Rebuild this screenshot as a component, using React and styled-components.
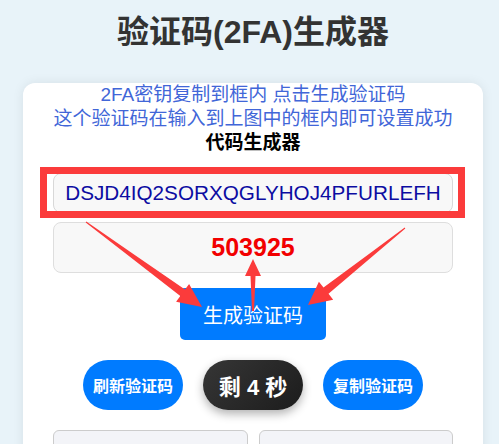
import React from "react";
import styled, { createGlobalStyle } from "styled-components";

const Global = createGlobalStyle`
  html, body { margin: 0; padding: 0; }
  body {
    background: #e8f3f9;
    font-family: "Liberation Sans", "Noto Sans CJK SC", sans-serif;
    overflow: hidden;
  }
`;

const Page = styled.div`
  width: 460px;
  margin-left: 23px;
  padding-top: 13px;
`;

const Title = styled.h1`
  margin: 0;
  height: 70px;
  font-size: 32px;
  line-height: 38px;
  font-weight: bold;
  color: #333;
  text-align: center;
  white-space: nowrap;
  font-family: "Liberation Sans", "Noto Sans CJK SC", sans-serif;
`;

const Card = styled.div`
  position: relative;
  background: #fff;
  border-radius: 12px;
  box-shadow: 0 0 12px rgba(0, 0, 0, 0.08);
  padding: 0 30px 30px;
  display: flex;
  flex-direction: column;
  align-items: center;
`;

const Hint = styled.div`
  font-size: 19px;
  line-height: 24px;
  color: #4166d8;
  text-align: center;
  white-space: nowrap;
`;

const SubTitle = styled.div`
  font-size: 19px;
  line-height: 24px;
  font-weight: bold;
  color: #000;
  text-align: center;
`;

const SecretWrap = styled.div`
  position: relative;
  margin-top: 18px;
  width: 100%;
`;

const Secret = styled.div`
  box-sizing: border-box;
  width: 100%;
  height: 40px;
  border: 1px solid #d8d8d8;
  border-radius: 8px;
  background: #f8f8f8;
  color: #0c0ca2;
  font-size: 20.7px;
  display: flex;
  align-items: center;
  justify-content: center;
  white-space: nowrap;
`;

const RedFrame = styled.div`
  position: absolute;
  left: -13px;
  right: -12px;
  top: -6px;
  bottom: -5px;
  border: 7px solid #fb3b3b;
  pointer-events: none;
`;

const Code = styled.div`
  box-sizing: border-box;
  margin-top: 9px;
  width: 100%;
  height: 51px;
  border: 1px solid #dedede;
  border-radius: 8px;
  background: #f8f8f8;
  color: #f20000;
  font-size: 25px;
  font-weight: bold;
  display: flex;
  align-items: center;
  justify-content: center;
`;

const GenButton = styled.button`
  margin-top: 15px;
  width: 146px;
  height: 52px;
  border: none;
  border-radius: 5px;
  background: #007bff;
  color: #fff;
  font-size: 20px;
  font-family: "Liberation Sans", "Noto Sans CJK SC", sans-serif;
  padding: 0;
`;

const PillRow = styled.div`
  margin-top: 20px;
  display: flex;
  gap: 20px;
  justify-content: center;
`;

const Pill = styled.button`
  width: 100px;
  height: 50px;
  border: none;
  border-radius: 25px;
  padding: 0;
  color: #fff;
  font-family: "Liberation Sans", "Noto Sans CJK SC", sans-serif;
  font-size: ${(p) => (p.$dark ? "22px" : "16px")};
  font-weight: ${(p) => (p.$dark ? 700 : 600)};
  background: ${(p) => (p.$dark ? "linear-gradient(135deg, #363636, #1c1c1c)" : "#007bff")};
  box-shadow: ${(p) => (p.$dark ? "0 4px 10px rgba(0,0,0,0.3)" : "none")};
  white-space: nowrap;
`;

const Grid = styled.div`
  margin-top: 20px;
  width: 100%;
  display: grid;
  grid-template-columns: 1fr 1fr;
  gap: 11px;
`;

const Box = styled.div`
  height: 60px;
  border: 1px solid #cccccc;
  border-radius: 6px;
  background: #f3f4f8;
`;

const Overlay = styled.svg`
  position: absolute;
  left: 0;
  top: 0;
  width: 460px;
  height: 300px;
  pointer-events: none;
  overflow: visible;
`;

function arrowPoints(x1, y1, x2, y2, tailW, shaftW, headW, headL) {
  const dx = x2 - x1;
  const dy = y2 - y1;
  const len = Math.hypot(dx, dy);
  const ux = dx / len;
  const uy = dy / len;
  const nx = -uy;
  const ny = ux;
  const bx = x2 - ux * headL;
  const by = y2 - uy * headL;
  const pts = [
    [x1 + nx * tailW / 2, y1 + ny * tailW / 2],
    [bx + nx * shaftW / 2, by + ny * shaftW / 2],
    [bx + nx * headW / 2, by + ny * headW / 2],
    [x2, y2],
    [bx - nx * headW / 2, by - ny * headW / 2],
    [bx - nx * shaftW / 2, by - ny * shaftW / 2],
    [x1 - nx * tailW / 2, y1 - ny * tailW / 2],
  ];
  return pts.map((p) => p.map((v) => v.toFixed(1)).join(",")).join(" ");
}

const arrows = [
  [63, 139, 179, 224, 1, 8, 22, 24],
  [230, 228, 230, 176, 2, 5, 16, 17],
  [382, 145, 285, 222, 1, 8, 23, 23],
];

export default function App() {
  return (
    <>
      <Global />
      <Page>
        <Title>验证码(2FA)生成器</Title>
        <Card>
          <Hint>2FA密钥复制到框内 点击生成验证码</Hint>
          <Hint>这个验证码在输入到上图中的框内即可设置成功</Hint>
          <SubTitle>代码生成器</SubTitle>
          <SecretWrap>
            <Secret>DSJD4IQ2SORXQGLYHOJ4PFURLEFH</Secret>
            <RedFrame />
          </SecretWrap>
          <Code>503925</Code>
          <GenButton>生成验证码</GenButton>
          <PillRow>
            <Pill>刷新验证码</Pill>
            <Pill $dark>剩 4 秒</Pill>
            <Pill>复制验证码</Pill>
          </PillRow>
          <Grid>
            <Box />
            <Box />
          </Grid>
          <Overlay viewBox="0 0 460 300">
            {arrows.map((a, i) => (
              <polygon key={i} points={arrowPoints(...a)} fill="#fb3b3b" />
            ))}
          </Overlay>
        </Card>
      </Page>
    </>
  );
}
